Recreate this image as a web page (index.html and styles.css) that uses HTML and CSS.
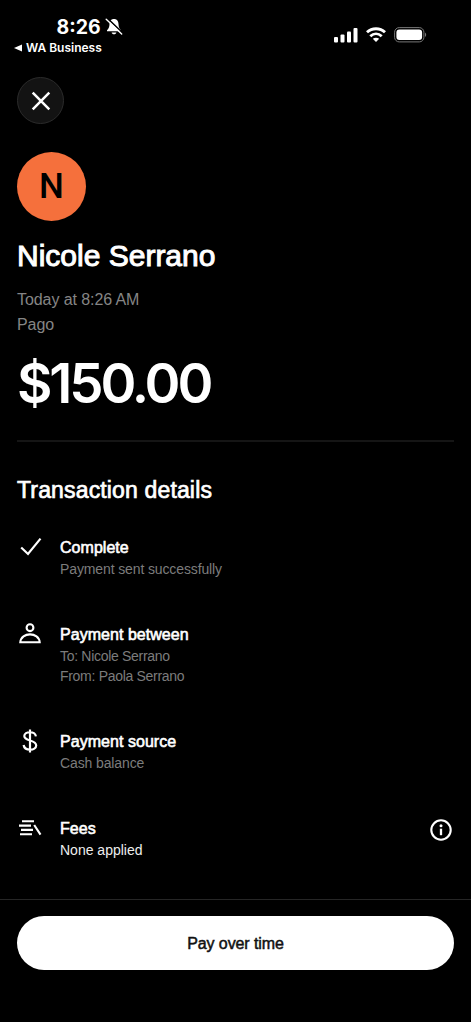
FILE: index.html
```html
<!DOCTYPE html>
<html lang="en">
<head>
<meta charset="utf-8">
<title>Transaction details</title>
<link rel="stylesheet" href="styles.css">
</head>
<body>
<div class="screen">
  <header class="status">
    <div class="status-left">
      <div class="clock"><span class="time">8:26</span>
        <svg width="18" height="18" viewBox="0 0 18 18"><path d="M9 1C5.900 1 4.600 3.300 4.500 6C4.400 9 3.800 10.500 2 12.200V13.300H16V12.200C14.200 10.500 13.600 9 13.500 6C13.400 3.300 12.100 1 9 1Z" fill="#fff"/><path d="M6.600 14.400H11.400C11 16.800 7 16.800 6.600 14.400Z" fill="#fff"/><path d="M2.200 .2L17.800 15" stroke="#000" stroke-width="1.600"/><path d="M1.200 1.300L16.700 16" stroke="#fff" stroke-width="1.400" stroke-linecap="round"/></svg>
      </div>
      <div class="back"><svg width="8" height="8" viewBox="0 0 8 8"><path d="M0 4L8 .4V7.600Z" fill="#fff"/></svg><span>WA Business</span></div>
    </div>
    <div class="status-right">
      <svg width="24" height="16" viewBox="0 0 24 16" fill="#fff"><rect x="0" y="10" width="4" height="5.500" rx="1"/><rect x="6.500" y="7.500" width="4" height="8" rx="1"/><rect x="13" y="4.500" width="4" height="11" rx="1"/><rect x="19.500" y="1" width="4" height="14.500" rx="1"/></svg>
      <svg width="20" height="15" viewBox="0 0 20 15" fill="none" stroke="#fff" stroke-width="2.900"><path d="M1 5.200C6 .5 14 .5 19 5.200"/><path d="M4.300 9.200C7.700 6.100 12.300 6.100 15.700 9.200"/><path d="M10 15L6.800 11.800C8.600 10.300 11.400 10.300 13.200 11.800Z" fill="#fff" stroke="none"/></svg>
      <svg width="33" height="16" viewBox="0 0 33 16"><rect x=".6" y=".6" width="29.300" height="14.300" rx="4.600" fill="none" stroke="#777" stroke-width="1"/><rect x="2.400" y="2.400" width="25.700" height="10.700" rx="3" fill="#fff"/><path d="M31 5.500C32.600 6.200 32.600 9.300 31 10Z" fill="#777"/></svg>
    </div>
  </header>

  <main class="content">
    <button class="close" aria-label="Close"><svg width="20" height="20" viewBox="0 0 20 20"><path d="M1.700 1.700L18.300 18.300M18.300 1.700L1.700 18.300" stroke="#fff" stroke-width="2.500"/></svg></button>
    <div class="avatar">N</div>
    <h1 class="name">Nicole Serrano</h1>
    <p class="meta">Today at 8:26 AM</p>
    <p class="meta">Pago</p>
    <p class="amount">$150.00</p>
    <hr class="divider">
    <h2 class="heading">Transaction details</h2>
    <ul class="details">
      <li class="item">
        <svg class="icon" width="26" height="24" viewBox="0 0 26 24"><path d="M4.200 11.500L11 18L23.500 2.600" fill="none" stroke="#fff" stroke-width="2.200"/></svg>
        <div class="body"><h3 class="title">Complete</h3><p class="sub">Payment sent successfully</p></div>
      </li>
      <li class="item">
        <svg class="icon" width="26" height="24" viewBox="0 0 26 24" fill="none" stroke="#fff" stroke-width="2.100"><circle cx="13" cy="4.700" r="3.400"/><path d="M3.300 19.300C4 8.700 22 8.700 22.700 19.300Z"/></svg>
        <div class="body"><h3 class="title">Payment between</h3><p class="sub tight">To: Nicole Serrano</p><p class="sub tight">From: Paola Serrano</p></div>
      </li>
      <li class="item">
        <svg class="icon" width="26" height="24" viewBox="0 0 26 24" fill="none" stroke="#fff" stroke-width="2.200"><path d="M13 -.5V22.500M18.900 6.400C18.200 1 7.300 .9 7.300 6C7.300 11.600 19.200 9.500 19.200 15.500C19.200 21 7.500 21.200 6.600 15"/></svg>
        <div class="body"><h3 class="title">Payment source</h3><p class="sub">Cash balance</p></div>
      </li>
      <li class="item">
        <svg class="icon" width="26" height="24" viewBox="0 0 26 24" stroke="#fff" stroke-width="2.100"><path d="M5 4.300H17M2 8.600H14M4 12.900H16M3 17.200H15M17.200 8L23.500 17.600"/></svg>
        <div class="body"><h3 class="title">Fees</h3><p class="sub strong">None applied</p></div>
        <svg class="info" width="22" height="22" viewBox="0 0 22 22"><circle cx="11" cy="11" r="9.700" fill="none" stroke="#fff" stroke-width="2.100"/><circle cx="11" cy="6.700" r="1.500" fill="#fff"/><path d="M11 9.700V16.200" stroke="#fff" stroke-width="2.300"/></svg>
      </li>
    </ul>
  </main>

  <footer class="footer"><button class="pay">Pay over time</button></footer>
</div>
</body>
</html>
```
FILE: styles.css
```css
* { box-sizing: border-box; margin: 0; padding: 0; }
body { background: #000; color: #fff; font-family: "Liberation Sans", Arial, sans-serif; }
svg { display: block; flex: none; overflow: visible; }
.screen { width: 471px; height: 1022px; display: flex; flex-direction: column; overflow: hidden; }

.status { height: 77px; display: flex; justify-content: space-between; padding: 17px 44px 0 14px; font-family: Inter, sans-serif; }
.clock { display: flex; align-items: center; gap: 4px; height: 20px; padding-left: 42.500px; }
.time { font-size: 19.500px; font-weight: 700; line-height: 20px; }
.back { display: flex; align-items: center; gap: 4px; height: 21px; font-size: 12px; font-weight: 600; line-height: 21px; }
.status-right { display: flex; align-items: center; gap: 8px; height: 35px; }

.content { flex: 1; padding: 0 17px; }
.close { width: 47px; height: 47px; display: flex; align-items: center; justify-content: center; border: 1px solid #2b2b2b; border-radius: 50%; background: #131313; }
.avatar { width: 69px; height: 69px; margin-top: 28px; border-radius: 50%; background: #f5703c; color: #000; font-family: Roboto, sans-serif; font-size: 35px; font-weight: 500; line-height: 69px; text-align: center; }
.name { margin-top: 16px; font-size: 30px; font-weight: 400; line-height: 38px; white-space: nowrap; -webkit-text-stroke: 1px #fff; }
.meta { font-size: 16px; line-height: 25px; letter-spacing: -0.08px; color: #858585; }
.name + .meta { margin-top: 12px; }
.amount { margin-top: 16px; font-family: Inter, sans-serif; font-size: 54.500px; font-weight: 600; line-height: 60px; letter-spacing: -3.1px; }
.divider { height: 2px; margin-top: 27px; border: 0; background: #151515; }
.heading { margin-top: 33px; font-size: 23px; font-weight: 400; line-height: 30px; letter-spacing: 0.15px; -webkit-text-stroke: 0.7px #fff; }

.details { margin-top: 32px; list-style: none; display: flex; flex-direction: column; gap: 45px; }
.item { display: flex; align-items: flex-start; }
.icon { margin: -1px 17px -4px 0; }
.body { flex: 1; }
.title { font-size: 16px; font-weight: 400; line-height: 22px; letter-spacing: 0.04px; -webkit-text-stroke: 0.6px #fff; }
.sub { font-size: 14px; line-height: 20px; letter-spacing: -0.12px; color: #7c7c7c; }
.tight { letter-spacing: -0.3px; }
.strong { letter-spacing: 0; color: #eee; }
.info { margin: 1px 2px 0 0; }

.footer { height: 123px; padding: 16px 17px 0; border-top: 1px solid #262626; }
.pay { display: block; width: 437px; height: 54px; border: 0; border-radius: 27px; background: #fff; color: #111; font-family: inherit; font-size: 16px; line-height: 56px; letter-spacing: -0.1px; text-align: center; -webkit-text-stroke: 0.5px #111; }
```
